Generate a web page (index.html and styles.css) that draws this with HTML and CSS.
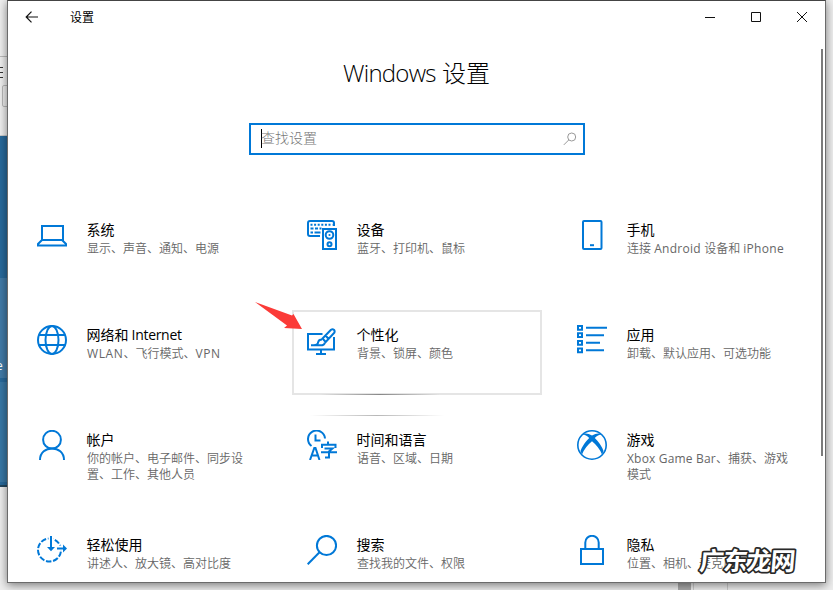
FILE: index.html
```html
<!DOCTYPE html>
<html lang="zh-CN">
<head>
<meta charset="utf-8">
<title>设置</title>
<link rel="stylesheet" href="styles.css">
</head>
<body>
<div class="desktop">
  <div class="behind">
    <div class="behind-top"><span class="behind-menu"></span><span class="behind-box"></span></div>
    <div class="behind-dark"></div>
    <div class="behind-mid">e</div>
    <div class="behind-low"></div>
    <div class="behind-edge"></div>
  </div>
  <main class="window">
    <header class="titlebar">
      <svg class="back" width="14" height="12" viewBox="0 0 14 12"><path d="M6.500.7 1.200 6l5.300 5.300M1.200 6H13"/></svg>
      <span class="caption">设置</span>
      <svg class="controls" width="104" height="12" viewBox="0 0 104 12"><path d="M0 6.500h10M46.500 1.500h9v9h-9zM92 1l10 10M102 1 92 11"/></svg>
    </header>
    <h1 class="heading"><span class="heading-latin">Windows</span> 设置</h1>
    <div class="search">
      <span class="caret"></span><span class="placeholder">查找设置</span>
      <svg width="14" height="14" viewBox="0 0 14 14"><circle cx="8.700" cy="5" r="4"/><path d="M5.800 7.900.8 12.900"/></svg>
    </div>
    <section class="tiles">
      <article class="tile">
        <svg class="icon" viewBox="0 0 30 30"><path d="M5 6h21v14H5zM5 20l-4 4v1.500h28V24l-4-4"/></svg>
        <div><h2>系统</h2><p>显示、声音、通知、电源</p></div>
      </article>
      <article class="tile">
        <svg class="icon" viewBox="0 0 30 30"><path d="M13 16H3q-2 0-2-2V3q0-2 2-2h22q2 0 2 2v3M16 9h13v20H16z"/><path d="M3.500 4.800h22" stroke-dasharray="2 1.600"/><path d="M3.500 8.500h11" stroke-dasharray="3 1.500"/><path d="M3.500 12.500h10" stroke-dasharray="2.500 1.500 6"/><circle cx="22.500" cy="15" r="3.800"/><circle cx="22.500" cy="24.200" r="2"/><circle class="solid" cx="22.500" cy="15" r="1.100"/></svg>
        <div><h2>设备</h2><p>蓝牙、打印机、鼠标</p></div>
      </article>
      <article class="tile">
        <svg class="icon" viewBox="0 0 30 30"><rect x="6" y="1" width="18.500" height="28" rx="1"/><path d="M13 25.200h4"/></svg>
        <div><h2>手机</h2><p>连接 <span class="latin">Android</span> 设备和 <span class="latin">iPhone</span></p></div>
      </article>
      <article class="tile">
        <svg class="icon" viewBox="0 0 30 30"><circle cx="15" cy="15" r="14"/><ellipse cx="15" cy="15" rx="6.500" ry="14"/><path d="M2 10h26M2 20h26"/></svg>
        <div><h2>网络和 <span class="internet">Internet</span></h2><p><span class="latin wide">WLAN</span>、飞行模式、<span class="latin wide">VPN</span></p></div>
      </article>
      <article class="tile hovered">
        <svg class="icon" viewBox="0 0 30 30"><path d="M15.500 6H1v15.500h26V9M14 22v4M9 26h10"/><path class="thin" d="M24 1.800 15.500 10.500l3.200 3.500L27.300 4.800q.8-1.900-.4-3.100-1.400-1-2.900.1zM18.500 7.500l3.200 3.500M15 11.500q-3.700 0-4 3.500-.6 2.300-7 2.300h9q5 0 4.700-3"/></svg>
        <div><h2>个性化</h2><p>背景、锁屏、颜色</p></div>
      </article>
      <article class="tile">
        <svg class="icon" viewBox="0 0 30 30"><path d="M1 1h4v3.800H1zM1 8.300h4v3.800H1zM1 16h4v3.800H1zM1 23.500h4v3.800H1zM9 2.800h21M9 10.300h18M9 17.800h14M9 25.300h18"/></svg>
        <div><h2>应用</h2><p>卸载、默认应用、可选功能</p></div>
      </article>
      <article class="tile">
        <svg class="icon" viewBox="0 0 30 30"><circle cx="15" cy="9.700" r="8.900"/><path d="M3 30C3 14.500 27 14.500 27 30"/></svg>
        <div><h2>帐户</h2><p>你的帐户、电子邮件、同步设置、工作、其他人员</p></div>
      </article>
      <article class="tile">
        <svg class="icon" viewBox="0 0 30 30"><path d="M4.500 16A8.500 8.500 0 1 1 18 8.500M8.500 4.500v6h5M3 30l4.300-12h1.200L12.500 30M4.500 25.500h6.500"/><path d="M21 11.500v3M15 18v-3.300h13.500V18M17.500 18.500h8l-3.500 3v6H18M14 22.300h16"/></svg>
        <div><h2>时间和语言</h2><p>语音、区域、日期</p></div>
      </article>
      <article class="tile">
        <svg class="icon" viewBox="0 0 30 30"><circle class="thin" cx="15" cy="15" r="14.200"/><path class="solid" d="M5 4.500Q9 2 15 5.500 21 2 25 4.500 21 4.300 17.800 8 24 14 26.500 21l-1.500 3.500Q22 17 15 11.300 8 17 5 24.500L3.500 21Q6 14 12.200 8 9 4.300 5 4.500z"/></svg>
        <div><h2>游戏</h2><p><span class="latin xbox">Xbox Game Bar</span>、捕获、游戏模式</p></div>
      </article>
      <article class="tile">
        <svg class="icon" viewBox="0 0 30 30"><circle cx="12.500" cy="15" r="11.500" stroke-dasharray="5.500 1.720" transform="rotate(8 12.500 15)"/><path class="clear" d="M14 0v13h16"/><path d="M14 1v13M20 13.500h8"/><path class="solid" d="m10 12 4 4.200 4-4.200zM26 9.500l4 4-4 4z"/></svg>
        <div><h2>轻松使用</h2><p>讲述人、放大镜、高对比度</p></div>
      </article>
      <article class="tile">
        <svg class="icon" viewBox="0 0 30 30"><circle cx="19.500" cy="10.500" r="9.600"/><path d="M12.500 17.300.7 29.300"/></svg>
        <div><h2>搜索</h2><p>查找我的文件、权限</p></div>
      </article>
      <article class="tile">
        <svg class="icon" viewBox="0 0 30 30"><path d="M4 14h22v15H4zM8.300 14V7.500a6.700 6.700 0 0 1 13.400 0V14"/></svg>
        <div><h2>隐私</h2><p>位置、相机、麦克风</p></div>
      </article>
    </section>
    <span class="scrollbar"></span>
    <span class="glow glow-tile"></span>
    <span class="glow glow-below"></span>
    <svg class="pointer" width="48" height="30" viewBox="0 0 48 30"><path d="M0 0 37 13.500 38.500 12 47 27 29 26 32 23.500z"/></svg>
    <svg class="watermark" width="108" height="34" viewBox="0 0 108 34"><text x="8" y="26" textLength="96" transform="skewX(-5)">广东龙网</text></svg>
  </main>
  <div class="below"><span class="below-thumb"></span><span class="below-cell"></span></div>
</div>
</body>
</html>
```
FILE: styles.css
```css
* { box-sizing: border-box; }
body {
  margin: 0;
  font-family: "Open Sans", "Noto Sans CJK SC", sans-serif;
  background: #efefef;
}
.desktop {
  display: grid;
  grid-template: 583px 7px / 7px 819px 7px;
  width: 833px;
  height: 590px;
  overflow: hidden;
}
.behind { display: flex; flex-direction: column; overflow: hidden; }
.behind-top { height: 136px; padding-top: 56px; background: #f0f0f0; border-bottom: 1px solid #ccc; }
.behind-menu {
  display: block;
  height: 22px;
  width: 7px;
  border-top: 1px solid #bbb;
  background: linear-gradient(#333, #333) 0 10px / 3px 1px no-repeat, linear-gradient(#333, #333) 0 15px / 3px 1px no-repeat, linear-gradient(#333, #333) 0 20px / 3px 1px no-repeat;
}
.behind-box { display: block; width: 12px; height: 22px; margin: 7px 0 0 2px; border: 1px solid #bbb; border-radius: 2px; }
.behind-dark { height: 142px; background: #286a9c; }
.behind-mid { height: 100px; padding-top: 80px; background: #417ba8; color: #fff; font-size: 12px; line-height: 16px; text-indent: -4px; }
.behind-low { height: 104px; background: #3878a6; border-top: 4px solid #286a9c; }
.behind-edge { height: 5px; background: #286a9c; border-bottom: 2px solid #23475f; }
.window {
  position: relative;
  display: flex;
  flex-direction: column;
  overflow: hidden;
  background: #fff;
  border: 1px solid #6b6b6b;
  border-top-color: #444;
  box-shadow: 0 2px 9px rgba(0, 0, 0, .5);
}
.titlebar { display: flex; align-items: center; height: 32px; padding: 0 16px 0 17px; flex: none; }
.back, .controls { fill: none; stroke: #111; stroke-width: 1.2; }
.controls { margin-left: auto; stroke-width: 1; }
.caption { margin-left: 31px; font-size: 12px; }
.heading {
  margin: 22px 0 0;
  height: 36px;
  line-height: 36px;
  font-size: 24px;
  font-weight: 300;
  text-align: center;
  color: #000;
}
.heading-latin { letter-spacing: -.75px; }
.search {
  display: flex;
  align-items: center;
  flex: none;
  width: 336px;
  height: 32px;
  margin: 32px 0 0 241px;
  padding: 0 6px 2px 10px;
  border: 2px solid #0078d7;
}
.caret { width: 1px; height: 19px; background: #000; }
.placeholder { margin-left: -1px; font-size: 14px; font-weight: 300; line-height: 20px; color: #777; }
.search svg { margin-left: auto; margin-top: 2px; fill: none; stroke: #999; }
.tiles {
  display: grid;
  grid-template-columns: repeat(3, 250px);
  grid-auto-rows: 85px;
  gap: 20px;
  margin: 50px 0 0 14px;
}
.tile { display: flex; gap: 20px; padding: 15px 8px 0 15px; }
.tile div { width: 162px; flex: none; }
.hovered { padding: 13px 6px 0 13px; border: 2px solid #e5e5e5; }
.hovered .icon { margin-top: 3px; }
.hovered .icon .thin { stroke-width: 2; }
.tile h2 { margin: 0 0 2px -.6px; font-size: 14px; line-height: 19px; font-weight: 400; color: #000; white-space: nowrap; }
.tile p { margin: 0; font-size: 12px; line-height: 16px; font-weight: 350; color: #666; }
.latin { font-weight: 400; letter-spacing: .3px; }
.wide { letter-spacing: .6px; }
.xbox { letter-spacing: .18px; }
.icon { width: 30px; height: 30px; flex: none; fill: none; stroke: #0078d7; stroke-width: 2; }
.icon .thin { stroke-width: 1.6; }
.icon .solid { fill: #0078d7; stroke: none; }
.icon .clear { stroke: #fff; stroke-width: 5; }
.internet { margin-left: -.5px; letter-spacing: -.3px; }
.scrollbar { position: absolute; right: 2px; top: 48px; width: 2px; height: 407px; background: #7a7a7a; }
.glow { position: absolute; height: 1px; background: linear-gradient(90deg, transparent, #888, transparent); }
.glow-tile { left: 312px; top: 393px; width: 120px; }
.glow-below { left: 302px; top: 414px; width: 134px; opacity: .6; }
.pointer { position: absolute; left: 247px; top: 301px; fill: #fb3b38; }
.watermark { position: absolute; left: 685px; top: 543px; }
.watermark text {
  font: 700 25px "Noto Sans CJK SC", sans-serif;
  fill: #fff;
  stroke: #292929;
  stroke-width: 3.5px;
  stroke-linejoin: round;
  paint-order: stroke;
}
.below { grid-column: 1 / -1; display: flex; padding-left: 678px; background: #eee; }
.below-thumb { width: 13px; background: #aaa; }
.below-cell { width: 35px; margin-left: 2px; border: solid #ccc; border-width: 0 1px; }
```
